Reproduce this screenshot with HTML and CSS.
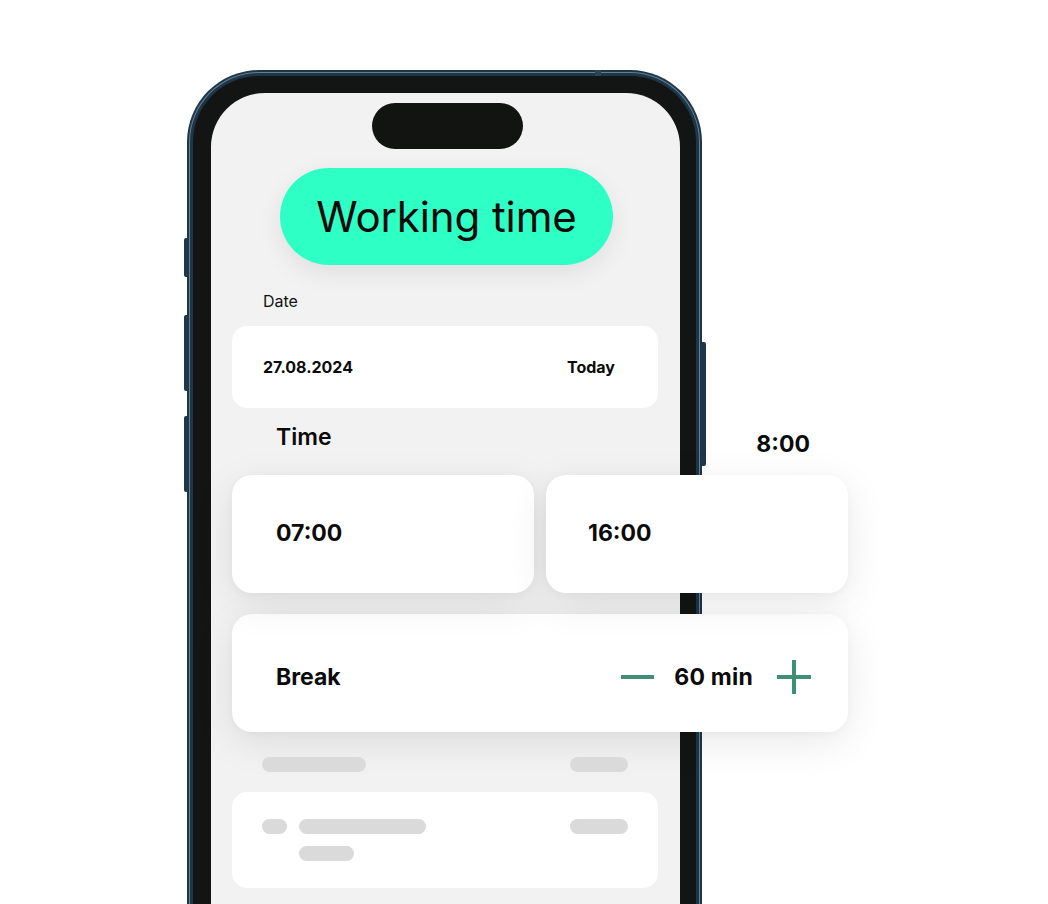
FILE: index.html
```html
<!DOCTYPE html>
<html lang="en">
<head>
<meta charset="utf-8">
<title>Working time</title>
<link rel="stylesheet" href="styles.css">
</head>
<body>
<div class="stage">
  <div class="phone">
    <span class="btn btn-l1"></span>
    <span class="btn btn-l2"></span>
    <span class="btn btn-l3"></span>
    <span class="btn btn-r1"></span>
    <span class="antenna"></span>
    <div class="screen">
      <div class="island"></div>
      <div class="pill">Working time</div>
      <div class="label">Date</div>
      <div class="date-card">
        <span class="date">27.08.2024</span>
        <span class="today">Today</span>
      </div>
      <div class="time-row">
        <span class="time-label">Time</span>
        <span class="duration">8:00</span>
      </div>
      <div class="time-grid">
        <div class="card time-card first">07:00</div>
        <div class="card time-card second">16:00</div>
      </div>
      <div class="card break-card">
        <span class="break-label">Break</span>
        <div class="stepper">
          <svg class="minus" width="33" height="34" viewBox="0 0 33 34"><rect x="0" y="15" width="33" height="4" fill="#3e8f74"/></svg>
          <span class="break-value">60 min</span>
          <svg class="plus" width="34" height="34" viewBox="0 0 34 34"><rect x="0" y="15" width="34" height="4" fill="#3e8f74"/><rect x="15" y="0" width="4" height="34" fill="#3e8f74"/></svg>
        </div>
      </div>
      <div class="skel-row">
        <span class="bar bar-w104"></span>
        <span class="bar bar-w58"></span>
      </div>
      <div class="skel-card">
        <span class="bar bar-dot"></span>
        <span class="bar bar-w127"></span>
        <span class="bar bar-w58 end"></span>
        <span class="bar bar-w55 second-row"></span>
      </div>
    </div>
  </div>
</div>
</body>
</html>
```
FILE: styles.css
```css
html, body {
  margin: 0;
  padding: 0;
  background: #ffffff;
  overflow: hidden;
}

.stage {
  width: 1048px;
  height: 904px;
  overflow: hidden;
  background: #ffffff;
  font-family: "Inter", "Noto Sans", sans-serif;
  color: #0b0b0b;
  padding-top: 73px;
  box-sizing: border-box;
}

.phone {
  position: relative;
  margin-left: 190px;
  width: 509px;
  height: 900px;
  box-sizing: border-box;
  border: 3px solid #1f3647;
  border-bottom: none;
  border-radius: 69px 69px 0 0;
  box-shadow: 0 0 0 1px #5f8097, 0 0 0 3px #1f3647;
  background: #131514;
  padding: 17px 16px 0 18px;
}

.btn {
  position: absolute;
  background: #1f3647;
  width: 4px;
}
.btn-l1 { left: -9px; top: 162px; height: 39px; border-radius: 2px 0 0 2px; }
.btn-l2 { left: -9px; top: 239px; height: 76px; border-radius: 2px 0 0 2px; }
.btn-l3 { left: -9px; top: 340px; height: 76px; border-radius: 2px 0 0 2px; }
.btn-r1 { right: -10px; top: 266px; height: 124px; width: 5px; border-radius: 0 2px 2px 0; }
.antenna {
  position: absolute;
  top: -6px;
  left: 402px;
  width: 6px;
  height: 6px;
  background: #2d4455;
}

.screen {
  height: 100%;
  background: #f2f2f2;
  border-radius: 54px 54px 0 0;
  padding: 10px 0 0 21px;
  box-sizing: border-box;
}

.island {
  width: 151px;
  height: 46px;
  margin-left: 140px;
  background: #121412;
  border-radius: 23px;
}

.pill {
  margin-top: 19px;
  margin-left: 48px;
  width: 333px;
  height: 97px;
  border-radius: 49px;
  background: #2effc4;
  box-shadow: 0 8px 26px rgba(0, 0, 0, 0.08);
  display: flex;
  align-items: center;
  justify-content: center;
  font-size: 42px;
  font-weight: 400;
  letter-spacing: -0.1px;
  color: #0a0a0a;
}

.label {
  margin-top: 26px;
  margin-left: 31px;
  font-size: 16px;
  line-height: 20px;
  color: #111;
}

.date-card {
  margin-top: 15px;
  width: 426px;
  height: 82px;
  box-sizing: border-box;
  background: #ffffff;
  border-radius: 15px;
  padding: 0 43px 0 31px;
  display: flex;
  align-items: center;
  justify-content: space-between;
  font-size: 16px;
  font-weight: 700;
}

.time-row {
  margin-top: 15px;
  width: 616px;
  height: 52px;
  box-sizing: border-box;
  padding: 0 38px 0 44px;
  display: flex;
  justify-content: space-between;
  align-items: flex-start;
  font-weight: 700;
}
.time-label {
  font-size: 23px;
  line-height: 28px;
  font-weight: 600;
}
.duration {
  font-size: 23px;
  line-height: 28px;
  margin-top: 7px;
}

.card {
  background: #ffffff;
  border-radius: 20px;
  box-shadow: 0 10px 40px rgba(0, 0, 0, 0.09), 0 2px 8px rgba(0, 0, 0, 0.03);
  box-sizing: border-box;
}

.time-grid {
  display: grid;
  grid-template-columns: 302px 302px;
  column-gap: 12px;
  width: 616px;
}

.time-card {
  height: 118px;
  padding-bottom: 2px;
  display: flex;
  align-items: center;
  font-size: 23px;
  font-weight: 700;
}
.time-card.first { padding-left: 44px; }
.time-card.second { padding-left: 42px; }

.break-card {
  margin-top: 21px;
  width: 616px;
  height: 118px;
  padding: 7px 37px 0 44px;
  display: flex;
  align-items: center;
  justify-content: space-between;
  font-size: 23px;
  font-weight: 700;
}

.stepper {
  display: flex;
  align-items: center;
}
.minus { display: block; }
.break-value { margin-left: 20px; margin-right: 24px; letter-spacing: 0.2px; }
.plus { display: block; }

.skel-row {
  margin-top: 25px;
  width: 426px;
  box-sizing: border-box;
  padding: 0 30px;
  display: flex;
  justify-content: space-between;
}

.bar {
  display: block;
  height: 15px;
  border-radius: 8px;
  background: #dadada;
}
.bar-w104 { width: 104px; }
.bar-w58 { width: 58px; }
.bar-w127 { width: 127px; }
.bar-w55 { width: 55px; }
.bar-dot { width: 25px; }

.skel-card {
  margin-top: 20px;
  width: 426px;
  height: 96px;
  box-sizing: border-box;
  background: #ffffff;
  border-radius: 15px;
  padding: 27px 30px 0 30px;
  display: grid;
  grid-template-columns: 25px 1fr 58px;
  column-gap: 12px;
  row-gap: 12px;
  align-content: start;
}
.skel-card .end { grid-column: 3; }
.skel-card .second-row { grid-column: 2; }
```
